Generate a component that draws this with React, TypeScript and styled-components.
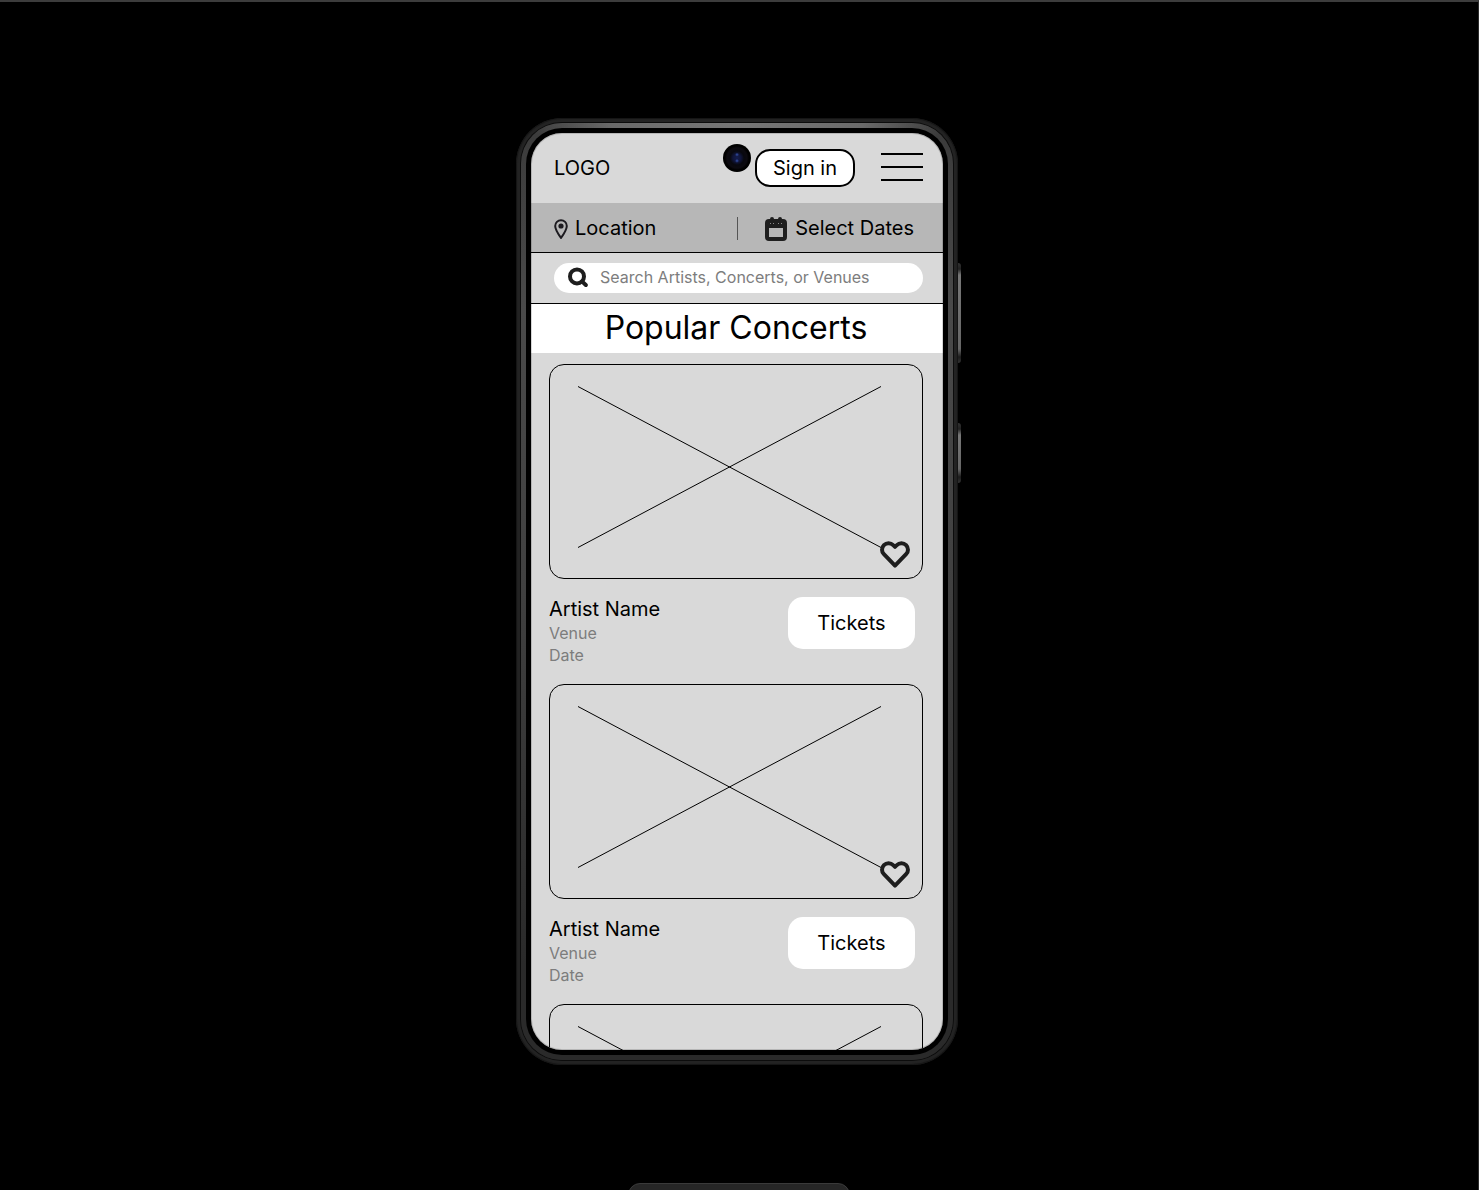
import React from "react";
import styled, { createGlobalStyle } from "styled-components";

const GlobalStyle = createGlobalStyle`
  *, *::before, *::after { box-sizing: border-box; }
  body { margin: 0; background: #000; }
  body, button, input { font-family: Inter, "Liberation Sans", sans-serif; }
  h1, h2, p, ul { margin: 0; padding: 0; font-weight: 400; }
  button { border: 0; padding: 0; background: none; color: inherit; cursor: pointer; }
`;

const Stage = styled.div`
  display: flex;
  justify-content: center;
  align-items: flex-start;
  height: 100vh;
  overflow: hidden;
  padding: 116px 4px 0 0;
  border-top: 2px solid #3c3c3c;
  border-right: 1px solid #2c2c2c;
  background: #000;
`;

const Shell = styled.div`
  position: relative;
  padding: 5px;
  border-radius: 46px;
  background: #232323;
  box-shadow: inset 0 0 1px 1px #151515;
`;

const Rim = styled.div`
  padding: 5px;
  border-radius: 41px;
  box-shadow: 0 0 0 1px #0c0c0c;
  background:
    radial-gradient(ellipse 210px 40px at 50% 0, #777 0%, #6a6a6a 60%, transparent 100%),
    linear-gradient(#3a3a3a, #4a4a4a 20%, #404040 50%, #2a2a2a 90%);
`;

const Bezel = styled.div`
  padding: 5px;
  border-radius: 36px;
  background: #000;
`;

const SideButton = styled.span<{ $top: number; $length: number }>`
  position: absolute;
  left: 100%;
  top: ${(p) => p.$top}px;
  width: 3px;
  height: ${(p) => p.$length}px;
  border-radius: 0 3px 3px 0;
  background: linear-gradient(#333, #222 6px, #777 12px, #666 calc(100% - 14px), #1c1c1c calc(100% - 6px), #333);
`;

const Screen = styled.main`
  position: relative;
  width: 412px;
  height: 917px;
  overflow: hidden;
  border-radius: 31px;
  background: #d9d9d9;
  color: #000;

  &::after {
    content: "";
    position: absolute;
    inset: 0;
    border-radius: 31px;
    box-shadow: inset 0 0 0 1px rgba(0, 0, 0, 0.16);
    pointer-events: none;
  }
`;

const Camera = styled.span`
  position: absolute;
  top: 11px;
  left: 192px;
  width: 28px;
  height: 28px;
  border-radius: 50%;
  background:
    radial-gradient(circle at 50% 38%, #3450a8 0, transparent 2px),
    radial-gradient(circle at 50% 60%, #3450a8 0, transparent 2px),
    radial-gradient(circle, #141c4c 0, #10153a 4px, #08080e 7px, #0c0a10 10px, #000 12px);
`;

const Header = styled.header`
  display: flex;
  align-items: center;
  height: 70px;
  padding: 0 20px 0 23px;
`;

const Logo = styled.a`
  margin-right: auto;
  font-size: 20px;
  line-height: 24px;
  color: inherit;
  text-decoration: none;
`;

const SignIn = styled.button`
  width: 100px;
  height: 38px;
  border: 2px solid #000;
  border-radius: 15px;
  background: #fff;
  font-size: 20px;
  line-height: 24px;
`;

const MenuButton = styled.button`
  display: flex;
  flex-direction: column;
  gap: 11px;
  width: 42px;
  margin-left: 26px;
  padding-bottom: 2px;
`;

const MenuLine = styled.span`
  height: 2px;
  width: 100%;
  background: #000;
`;

const Filters = styled.div`
  display: flex;
  align-items: center;
  height: 50px;
  padding: 1px 29px 0 23px;
  border-bottom: 1px solid #000;
  background: #b7b7b7;
`;

const Filter = styled.button<{ $gap: number }>`
  display: flex;
  align-items: center;
  gap: ${(p) => p.$gap}px;
  font-size: 20px;
  line-height: 24px;
`;

const Divider = styled.span`
  width: 1px;
  height: 23px;
  margin: 0 27px 0 auto;
  background: #555;
`;

const SearchBar = styled.form`
  padding: 10px 20px 10px 23px;
  border-bottom: 1px solid #000;
`;

const SearchField = styled.label`
  display: flex;
  align-items: center;
  gap: 12px;
  height: 30px;
  padding: 0 14px 2px;
  border-radius: 15px;
  background: #fff;
`;

const SearchInput = styled.input`
  flex: 1;
  min-width: 0;
  padding: 0;
  border: 0;
  outline: 0;
  background: none;
  font-size: 16px;
  line-height: 20px;

  &::placeholder { color: #7d7d7d; opacity: 1; }
`;

const Title = styled.h1`
  padding: 4px 2px 5px 0;
  background: #fff;
  font-size: 32px;
  line-height: 40px;
  text-align: center;
`;

const List = styled.ul`
  display: grid;
  gap: 17px;
  padding: 11px 20px 0 18px;
  list-style: none;
`;

const Photo = styled.div`
  position: relative;
  height: 215px;
  border: 1px solid #000;
  border-radius: 15px;
`;

const Cross = styled.svg`
  display: block;
  margin: 21px 0 0 28px;
`;

const Favorite = styled.button`
  position: absolute;
  right: 12px;
  bottom: 9px;
  line-height: 0;
`;

const Info = styled.div`
  display: flex;
  justify-content: space-between;
  align-items: flex-start;
  padding: 18px 8px 0 0;
`;

const Artist = styled.h2`
  padding-bottom: 1px;
  font-size: 20px;
  line-height: 24px;
`;

const Detail = styled.p`
  font-size: 16px;
  line-height: 22px;
  color: #7d7d7d;
`;

const Details = styled.div`
  height: 70px;
`;

const Tickets = styled.button`
  width: 127px;
  height: 52px;
  border-radius: 15px;
  background: #fff;
  font-size: 20px;
  line-height: 24px;
`;

const Tray = styled.div`
  position: fixed;
  bottom: -33px;
  left: 50%;
  width: 222px;
  height: 40px;
  margin-left: -112px;
  border: 1px solid #3a3a3a;
  border-radius: 12px;
  background: #262626;
`;

const PinIcon = () => (
  <svg width="14" height="22" viewBox="0 -2 14 22" fill="none" aria-hidden="true">
    <path d="M7 1.2C3.8 1.2 1.2 3.7 1.2 6.9C1.2 10.8 7 18.8 7 18.8S12.8 10.8 12.8 6.9C12.8 3.7 10.2 1.2 7 1.2Z" stroke="#1d1b20" strokeWidth="2" />
    <circle cx="7" cy="7" r="2.6" fill="#1d1b20" />
  </svg>
);

const CalendarIcon = () => (
  <svg width="22" height="26" viewBox="0 -2 22 26" fill="none" aria-hidden="true">
    <rect x="2" y="4" width="18" height="18" rx="2" stroke="#1e1e1e" strokeWidth="4" />
    <path d="M2 8H20" stroke="#1e1e1e" strokeWidth="6" />
    <path d="M7 2V6M15 2V6" stroke="#1e1e1e" strokeWidth="4" strokeLinecap="round" />
    <path d="M5 6.5H6M8 6.5H9M13 6.5H14M16 6.5H17" stroke="#8a8a8a" strokeWidth="1" />
  </svg>
);

const SearchIcon = () => (
  <svg width="20" height="20" viewBox="0 0 20 20" fill="none" aria-hidden="true">
    <circle cx="9" cy="9.4" r="7" stroke="#1e1e1e" strokeWidth="4" />
    <path d="M14 14.4L17.8 18" stroke="#1e1e1e" strokeWidth="4" strokeLinecap="round" />
  </svg>
);

const HeartIcon = () => (
  <svg width="30" height="28" viewBox="0 0 30 28" fill="none" aria-hidden="true">
    <path
      d="M26.1 4.1C23.5 1.5 19.4 1.5 16.8 4.1L15 5.8L13.2 4.1C10.6 1.5 6.5 1.5 3.9 4.1C1.4 6.6 1.4 10.7 3.9 13.2L15 24.6L26.1 13.2C28.6 10.7 28.6 6.6 26.1 4.1Z"
      stroke="#1e1e1e"
      strokeWidth="4"
      strokeLinejoin="round"
    />
  </svg>
);

type Concert = { id: number; artist?: string; venue?: string; date?: string };

const concerts: Concert[] = [
  { id: 1, artist: "Artist Name", venue: "Venue", date: "Date" },
  { id: 2, artist: "Artist Name", venue: "Venue", date: "Date" },
  { id: 3 },
];

export default function App() {
  return (
    <>
      <GlobalStyle />
      <Stage>
        <Shell>
          <SideButton $top={145} $length={100} />
          <SideButton $top={305} $length={60} />
          <Rim>
            <Bezel>
              <Screen>
                <Header>
                  <Logo href="#">LOGO</Logo>
                  <SignIn type="button">Sign in</SignIn>
                  <MenuButton type="button" aria-label="Menu">
                    <MenuLine />
                    <MenuLine />
                    <MenuLine />
                  </MenuButton>
                </Header>
                <Camera />
                <Filters>
                  <Filter type="button" $gap={7}>
                    <PinIcon />
                    Location
                  </Filter>
                  <Divider />
                  <Filter type="button" $gap={8}>
                    <CalendarIcon />
                    Select Dates
                  </Filter>
                </Filters>
                <SearchBar>
                  <SearchField>
                    <SearchIcon />
                    <SearchInput
                      type="text"
                      aria-label="Search"
                      placeholder="Search Artists, Concerts, or Venues"
                    />
                  </SearchField>
                </SearchBar>
                <Title>Popular Concerts</Title>
                <List>
                  {concerts.map((c) => (
                    <li key={c.id}>
                      <Photo>
                        <Cross width="304" height="162" viewBox="0 0 304 162" stroke="#000" aria-hidden="true">
                          <path d="M0 0.5L303 161.5M0 161.5L303 0.5" />
                        </Cross>
                        <Favorite type="button" aria-label="Favorite">
                          <HeartIcon />
                        </Favorite>
                      </Photo>
                      {c.artist && (
                        <Info>
                          <Details>
                            <Artist>{c.artist}</Artist>
                            <Detail>{c.venue}</Detail>
                            <Detail>{c.date}</Detail>
                          </Details>
                          <Tickets type="button">Tickets</Tickets>
                        </Info>
                      )}
                    </li>
                  ))}
                </List>
              </Screen>
            </Bezel>
          </Rim>
        </Shell>
      </Stage>
      <Tray />
    </>
  );
}
